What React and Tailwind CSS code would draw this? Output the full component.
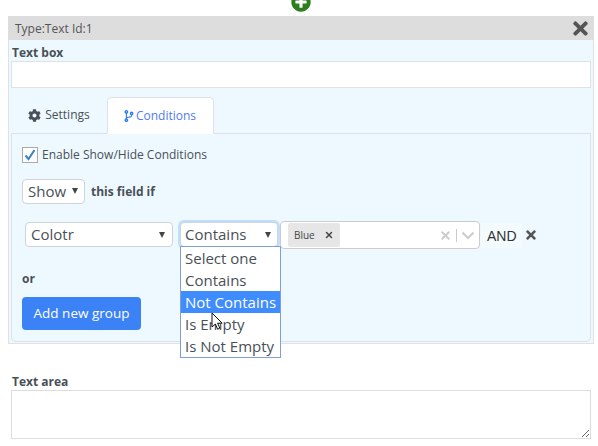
import { X } from 'lucide-react';
import { FaCog, FaCodeBranch, FaTimes, FaPlusCircle } from 'react-icons/fa';

const font = { fontFamily: '"Open Sans", "Noto Sans", sans-serif' };

function Caret() {
    return <span className="w-0 h-0 border-x-[3.5px] border-x-transparent border-t-[6px] border-t-[#444]" />;
}

function Select({ label, className }) {
    return (
        <div className={`flex items-center justify-between bg-white border border-[#ced4da] rounded-[4px] text-[#495057] text-[15px] ${className}`}>
            <span>{label}</span>
            <Caret />
        </div>
    );
}

function Dropdown() {
    const options = ['Select one', 'Contains', 'Not Contains', 'Is Empty', 'Is Not Empty'];
    return (
        <div className="absolute left-[180px] top-[246px] w-[101px] h-[112px] bg-white border border-[#7f9fd8] text-[15px] text-[#495057] z-10">
            {options.map((o) => (
                <div key={o} className={`h-[22px] leading-[22px] pl-1 whitespace-nowrap ${o === 'Not Contains' ? 'bg-[#3f8cff] text-white' : ''}`}>
                    {o}
                </div>
            ))}
        </div>
    );
}

function Cursor() {
    return (
        <svg className="absolute left-[211px] top-[312px] z-20" width="13" height="20" viewBox="0 0 13 20">
            <path d="M1 1v14l3.4-3 2.2 5.2 2.2-1-2.2-5h4.6z" fill="#fff" stroke="#111" strokeWidth="1" />
        </svg>
    );
}

export default function App() {
    return (
        <div className="relative w-[598px] h-[446px] bg-white overflow-hidden text-[12px] text-[#495057]" style={font}>
            <FaPlusCircle className="absolute left-[291px] top-[-8px] text-[#2e7d1f]" size={20} />
            <Dropdown />
            <Cursor />

            <div className="pt-4 pl-2 pr-1">
                <div className="h-[328px] border border-[#dee2e6] border-t-0 bg-[#eef9ff] flex flex-col">
                    <div className="h-6 -mx-px bg-[#dddddd] flex items-center justify-between pl-[7px] pr-[3px] text-[12px] text-[#555]">
                        <span className="mt-px">Type:Text Id:1</span>
                        <FaTimes size={21} className="text-[#555]" />
                    </div>
                    <div className="flex-1 pl-[2px] pr-[2px] pt-[4px] flex flex-col">
                        <label className="font-bold text-[12px] leading-[17px] text-[#495057] pl-px">Text box</label>
                        <div className="h-[27px] bg-white border border-[#dee2e6]" />

                        <div className="flex mt-[9px] pl-[1px] h-[36px] text-[12px]">
                            <div className="w-[95px] flex items-center justify-center gap-[3px] text-[#495057] pr-[1px]">
                                <FaCog size={13} />
                                <span className="ml-px">Settings</span>
                            </div>
                            <div className="w-[107px] -mb-px z-[1] flex items-center justify-center gap-[1px] bg-white border border-[#dee2e6] border-b-white rounded-t-[5px] text-[#4d7cf5] pr-[2px]">
                                <FaCodeBranch size={12} className="text-[#2f80ed]" />
                                <span>Conditions</span>
                            </div>
                        </div>

                        <div className="h-[209px] border border-[#dee2e6] rounded-b-[5px] pl-[10px] flex flex-col">
                            <div className="flex items-center gap-[4px] mt-[13px] h-[16px]">
                                <span className="w-[16px] h-[16px] bg-white border border-[#aaa] flex items-center justify-center">
                                    <svg width="14" height="14" viewBox="0 0 14 14">
                                        <path d="M2.5 7.5l3 3.5 6-9" fill="none" stroke="#3b82c4" strokeWidth="2" />
                                    </svg>
                                </span>
                                <span className="text-[12px]">Enable Show/Hide Conditions</span>
                            </div>

                            <div className="flex items-center gap-[6px] mt-[16px]">
                                <Select label="Show" className="w-[63px] h-[25px] pl-[5px] pr-[6px] pb-px" />
                                <span className="font-bold text-[12px]">this field if</span>
                            </div>

                            <div className="flex items-start mt-[18px] ml-[3px]">
                                <Select label="Colotr" className="w-[148px] h-[25px] pl-[5px] pr-[7px]" />
                                <Select label="Contains" className="w-[98px] h-[25px] ml-[7px] pl-[4px] pr-[6px] border-[#80bdff] shadow-[0_0_0_2px_#bfdfff]" />
                                <div className="w-[200px] h-[28px] ml-[2px] -mt-px bg-white border border-[#cccccc] rounded-[4px] flex items-center pl-[7px] pr-[4px]">
                                    <span className="h-[24px] w-[52px] pl-[6px] pr-[6px] bg-[#e6e6e6] rounded-[2px] flex items-center justify-between text-[10px] text-[#444]">
                                        Blue
                                        <X size={10} strokeWidth={3.5} />
                                    </span>
                                    <X size={13} strokeWidth={3.5} className="ml-auto text-[#cccccc]" />
                                    <span className="w-px h-[13px] bg-[#cccccc] mx-[4px]" />
                                    <svg width="14" height="14" viewBox="0 0 14 14">
                                        <path d="M1.5 4.5l5.5 5.5 5.5-5.5" fill="none" stroke="#cccccc" strokeWidth="2" />
                                    </svg>
                                </div>
                                <span className="ml-[1px] mt-[1px] h-[25px] w-[41px] pl-[6px] bg-[#f4fbff] text-[14px] leading-[26px] text-[#333]" style={{ fontFamily: '"Liberation Sans", sans-serif' }}>AND</span>
                                <FaTimes size={14} className="ml-[2px] mt-[6px] text-[#555]" />
                            </div>

                            <span className="font-bold text-[12px] mt-[21px] leading-[17px]">or</span>
                            <button className="w-[119px] h-[33px] mt-[10px] bg-[#3b82f6] text-white text-[13.5px] rounded-[4px]">Add new group</button>
                        </div>
                    </div>
                </div>
            </div>

            <div className="pl-[11px] pr-[7px] mt-[29px]">
                <label className="block font-bold text-[12px] leading-[17px] pl-px">Text area</label>
                <textarea className="block w-full h-[49px] bg-white border border-[#dddddd] outline-none" />
            </div>
        </div>
    );
}
